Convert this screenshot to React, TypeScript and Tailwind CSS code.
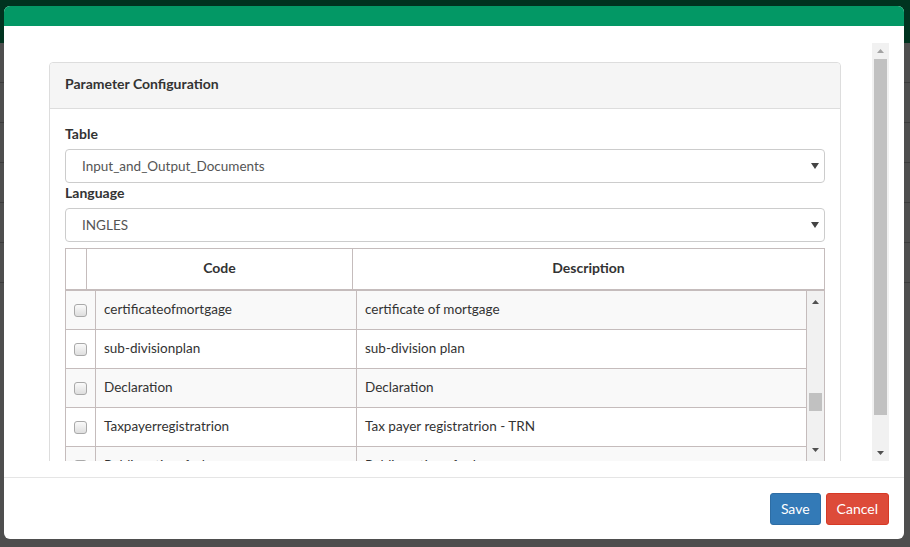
const rows = [
  { code: "certificateofmortgage", desc: "certificate of mortgage" },
  { code: "sub-divisionplan", desc: "sub-division plan" },
  { code: "Declaration", desc: "Declaration" },
  { code: "Taxpayerregistratrion", desc: "Tax payer registratrion - TRN" },
  { code: "Publicnoticeofsale", desc: "Public notice of sale" },
  { code: "Surveyplan", desc: "Survey plan" },
];

const Arrow = ({ up, color }: { up?: boolean; color: string }) => (
  <svg width="7" height="4" viewBox="0 0 7 4" className="block">
    <path d={up ? "M3.5 0L7 4H0z" : "M0 0h7L3.5 4z"} fill={color} />
  </svg>
);

const Caret = () => (
  <svg width="8" height="6" viewBox="0 0 8 6" className="block">
    <path d="M0 0h8L4 6z" fill="#444" />
  </svg>
);

const Checkbox = () => (
  <div className="w-[13px] h-[13px] rounded-[3px] border border-[#a9a9a9] bg-gradient-to-b from-[#fafafa] to-[#dedede]" />
);

const Select = ({ value }: { value: string }) => (
  <div className="h-[34px] rounded-[4px] border border-[#cccccc] flex items-center justify-between pl-[16px] pr-[5px] text-[13.5px] text-[#555]">
    <span>{value}</span>
    <Caret />
  </div>
);

export default function App() {
  return (
    <div
      className="relative w-[910px] h-[547px] overflow-hidden bg-[#4e4e4e]"
      style={{ fontFamily: "Lato, 'Noto Sans', sans-serif" }}
    >
      <div className="h-[43px] bg-[#00331f]" />
      <div className="flex flex-col">
        {[0, 1, 2, 3, 4, 5].map((i) => (
          <div key={i} className="h-[40px] border-b border-[#3c3c3c]" />
        ))}
      </div>

      <div className="absolute left-[4px] top-[6px] w-[900px] h-[533px] bg-white rounded-[6px] overflow-hidden flex flex-col">
        <div className="h-[20px] bg-[#039865] shrink-0" />

        <div className="pt-[17px] pb-[16px] pr-[15px] flex">
          <div className="w-[868px] h-[418px] overflow-hidden pl-[45px] pr-[31px] pt-[19px]">
            <div className="border border-[#dddddd] rounded-[4px] h-[600px]">
              <div className="h-[46px] bg-[#f5f5f5] border-b border-[#dddddd] rounded-t-[4px] px-[15px] pb-[4px] flex items-center text-[14px] font-bold text-[#333]">
                Parameter Configuration
              </div>
              <div className="px-[15px] pt-[15px]">
                <div className="h-[20px] leading-[20px] text-[14px] font-bold text-[#333] mb-[5px]">Table</div>
                <Select value="Input_and_Output_Documents" />
                <div className="h-[20px] leading-[20px] text-[14px] font-bold text-[#333] mb-[5px]">Language</div>
                <Select value="INGLES" />

                <div className="mt-[6px] text-[13.5px] text-[#333]">
                  <div className="flex h-[43px] border border-b-2 border-[#c5bcbc] font-bold text-[14px]">
                    <div className="w-[21px] border-r border-[#c5bcbc]" />
                    <div className="w-[266px] border-r border-[#c5bcbc] flex items-center justify-center pb-[3px]">Code</div>
                    <div className="flex-1 flex items-center justify-center pb-[3px]">Description</div>
                  </div>
                  <div className="flex h-[170px] border-x border-[#c5bcbc] overflow-hidden">
                    <div className="flex-1 overflow-hidden">
                      {rows.map((r, i) => (
                        <div
                          key={r.code}
                          className={`flex h-[39px] border-b border-[#c5bcbc] ${i % 2 === 0 ? "bg-[#f9f9f9]" : "bg-white"}`}
                        >
                          <div className="w-[30px] border-r border-[#c5bcbc] flex items-center justify-center">
                            <Checkbox />
                          </div>
                          <div className="w-[261px] border-r border-[#c5bcbc] flex items-center pl-[8px] pb-[2px]">{r.code}</div>
                          <div className="flex-1 border-r border-[#c5bcbc] flex items-center pl-[8px] pb-[2px]">{r.desc}</div>
                        </div>
                      ))}
                    </div>
                    <div className="w-[17px] bg-[#f1f1f1] flex flex-col items-center pt-[9px]">
                      <Arrow up color="#505050" />
                      <div className="mt-[89px] w-[13px] h-[18px] bg-[#c1c1c1]" />
                      <div className="mt-[37px]">
                        <Arrow color="#505050" />
                      </div>
                    </div>
                  </div>
                </div>
              </div>
            </div>
          </div>

          <div className="w-[17px] h-[418px] bg-[#f1f1f1] flex flex-col items-center pt-[6px]">
            <Arrow up color="#a3a3a3" />
            <div className="mt-[6px] w-[13px] h-[356px] bg-[#c1c1c1]" />
            <div className="mt-[36px]">
              <Arrow color="#505050" />
            </div>
          </div>
        </div>

        <div className="flex-1 border-t border-[#e5e5e5] flex justify-end items-start pt-[15px] pr-[15px] gap-[5px]">
          <button className="h-[32px] px-[10px] pb-[2px] rounded-[3px] bg-[#337ab7] border border-[#2e6da4] text-white text-[14px]">
            Save
          </button>
          <button className="h-[32px] px-[10px] pb-[2px] rounded-[3px] bg-[#dd4b39] border border-[#d73925] text-white text-[14px]">
            Cancel
          </button>
        </div>
      </div>
    </div>
  );
}
